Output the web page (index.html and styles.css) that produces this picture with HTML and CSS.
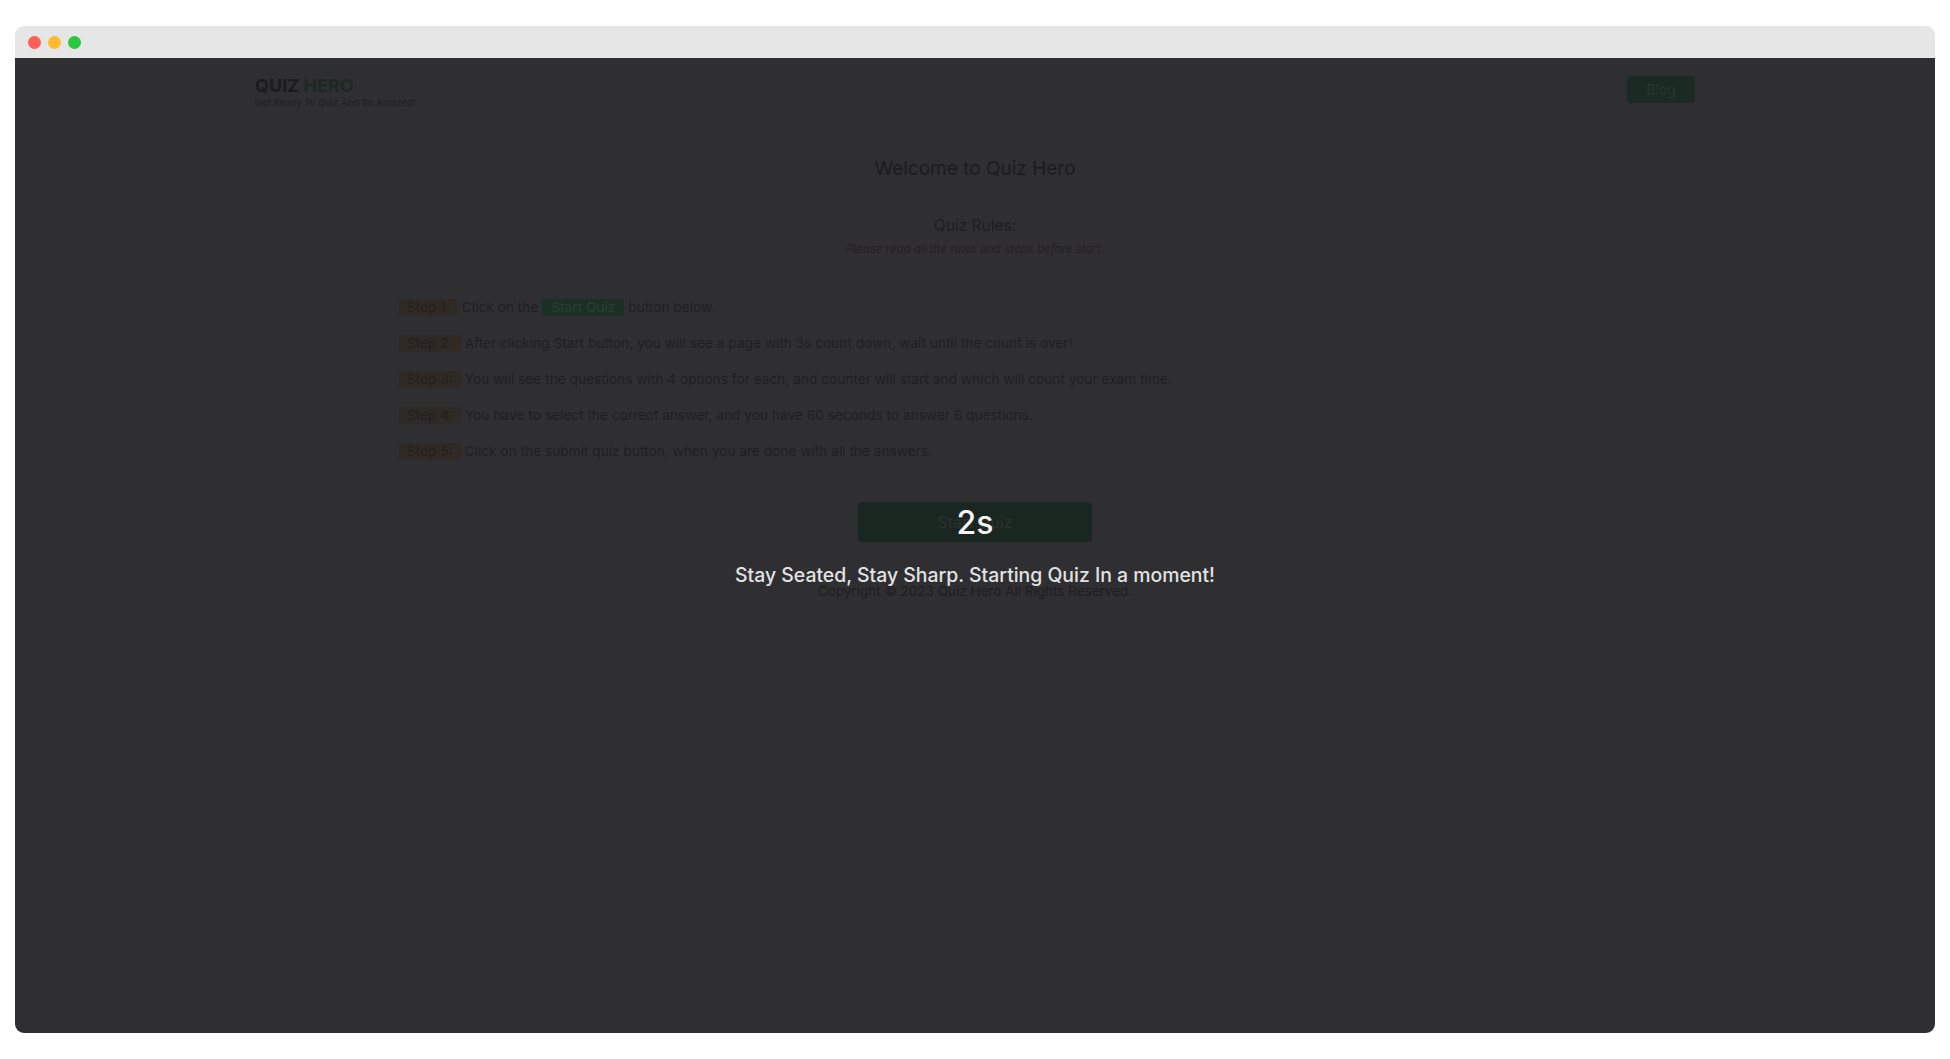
FILE: index.html
```html
<!DOCTYPE html>
<html lang="en">
<head>
<meta charset="utf-8">
<title>Quiz Hero</title>
<link rel="stylesheet" href="styles.css">
</head>
<body>
<div class="window">
  <div class="titlebar">
    <span class="dot dot-red"></span>
    <span class="dot dot-yellow"></span>
    <span class="dot dot-green"></span>
  </div>
  <div class="viewport">
    <header class="header">
      <div class="logo">
        <div class="logo-title">QUIZ <span class="logo-accent">HERO</span></div>
        <div class="logo-tagline">Get Ready To Quiz And Be Amazed!</div>
      </div>
      <a class="blog-btn">Blog</a>
    </header>
    <main class="main">
      <h1 class="welcome">Welcome to Quiz Hero</h1>
      <h2 class="rules-title">Quiz Rules:</h2>
      <p class="rules-note">Please read all the rules and steps before start.</p>
      <ul class="steps">
        <li class="step"><span class="step-label">Step 1:</span><span class="step-text">Click on the <span class="inline-btn">Start Quiz</span> button below.</span></li>
        <li class="step"><span class="step-label">Step 2:</span><span class="step-text">After clicking Start button, you will see a page with 3s count down, wait until the count is over!</span></li>
        <li class="step"><span class="step-label">Step 3:</span><span class="step-text">You will see the questions with 4 options for each, and counter will start and which will count your exam time.</span></li>
        <li class="step"><span class="step-label">Step 4:</span><span class="step-text">You have to select the correct answer, and you have 60 seconds to answer 6 questions.</span></li>
        <li class="step"><span class="step-label">Step 5:</span><span class="step-text">Click on the submit quiz button, when you are done with all the answers.</span></li>
      </ul>
      <div class="start-wrap"><button class="start-btn">Start Quiz</button></div>
    </main>
    <footer class="footer">Copyright © 2023 Quiz Hero All Rights Reserved.</footer>
    <div class="countdown">
      <div class="count-num">2s</div>
      <div class="count-msg">Stay Seated, Stay Sharp. Starting Quiz In a moment!</div>
    </div>
  </div>
</div>
</body>
</html>
```

FILE: styles.css
```css
* { box-sizing: border-box; }
html, body { margin: 0; padding: 0; background: #ffffff; }
body {
  font-family: Inter, "Noto Sans", "Liberation Sans", sans-serif;
  padding: 26px 15px 26px 15px;
}
.window {
  width: 1920px;
  height: 1007px;
  border-radius: 9px;
  overflow: hidden;
  display: flex;
  flex-direction: column;
}
.titlebar {
  height: 32px;
  background: #e6e6e6;
  display: flex;
  align-items: center;
  gap: 7px;
  padding-left: 13px;
  padding-top: 1px;
  flex-shrink: 0;
}
.dot { width: 13px; height: 13px; border-radius: 50%; display: block; }
.dot-red { background: #ff5f57; }
.dot-yellow { background: #febc2e; }
.dot-green { background: #28c840; }

.viewport {
  flex: 1;
  background: #2f2f31;
  position: relative;
  display: flex;
  flex-direction: column;
}
.header {
  width: 1440px;
  margin: 0 auto;
  display: flex;
  justify-content: space-between;
  align-items: flex-start;
  padding: 17px 0 14px;
}
.logo-title {
  font-size: 18px;
  font-weight: 700;
  line-height: 22px;
  color: #1b1b1d;
}
.logo-accent { color: #1b2921; }
.logo-tagline {
  font-size: 9.5px;
  line-height: 12px;
  color: #1f1f21;
}
.blog-btn {
  margin-top: 1px;
  width: 68px;
  height: 27px;
  border-radius: 4px;
  background: #1b2a22;
  color: #2a3630;
  font-size: 14px;
  display: flex;
  align-items: center;
  justify-content: center;
}
.main {
  width: 1152px;
  margin: 0 auto;
  display: flex;
  flex-direction: column;
}
.welcome {
  margin: 32px 0 0;
  text-align: center;
  font-size: 19px;
  font-weight: 400;
  line-height: 28px;
  color: #1c1c1e;
}
.rules-title {
  margin: 32px 0 0;
  text-align: center;
  font-size: 15.5px;
  font-weight: 400;
  line-height: 22px;
  color: #1e1e20;
}
.rules-note {
  margin: 4px 0 0;
  text-align: center;
  font-size: 11.5px;
  font-style: italic;
  line-height: 16px;
  color: #251f21;
}
.steps {
  list-style: none;
  margin: 42px 0 0;
  padding: 0;
  display: flex;
  flex-direction: column;
  gap: 19px;
}
.step {
  display: flex;
  align-items: center;
  height: 17px;
  font-size: 13.7px;
  color: #1f1f21;
}
.step-label {
  background: #302a26;
  color: #221f1d;
  border-radius: 3px;
  padding: 0 8px;
  line-height: 17px;
  margin-right: 4px;
}
.step-text { line-height: 17px; }
.inline-btn {
  background: #1b2f24;
  color: #2a3f33;
  border-radius: 3px;
  padding: 0 9px;
  display: inline-block;
  line-height: 17px;
}
.start-wrap {
  display: flex;
  justify-content: center;
  margin-top: 42px;
}
.start-btn {
  width: 234px;
  height: 40px;
  border: 0;
  border-radius: 4px;
  background: #1a2620;
  color: #2c302e;
  font-family: inherit;
  font-size: 16px;
}
.footer {
  text-align: center;
  margin-top: 39px;
  font-size: 13.5px;
  line-height: 20px;
  color: #1f1d1f;
}
.countdown {
  position: absolute;
  inset: 0;
  display: flex;
  flex-direction: column;
  align-items: center;
  justify-content: center;
  color: #e4e4e6;
}
.count-num {
  font-size: 32px;
  line-height: 40px;
  font-weight: 500;
  color: #f4f4f4;
}
.count-msg {
  font-size: 19.4px;
  line-height: 28px;
  font-weight: 500;
  margin-top: 18px;
  color: #e2e2e4;
}
```
